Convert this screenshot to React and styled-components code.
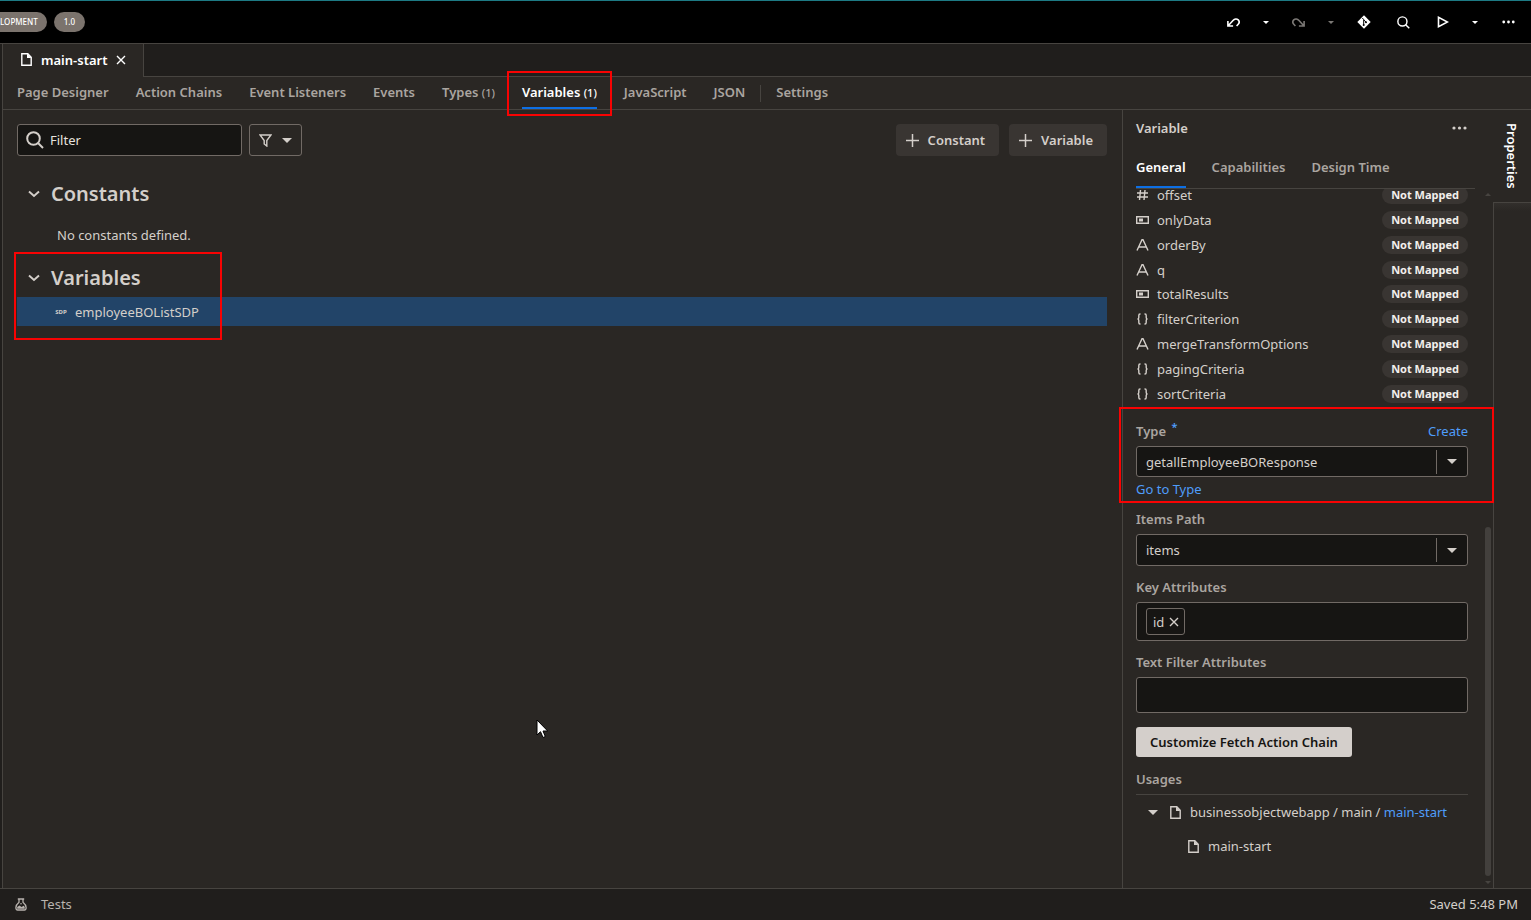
import React from 'react';
import styled, { createGlobalStyle } from 'styled-components';

const Global = createGlobalStyle`
  * { box-sizing: border-box; }
  body {
    margin: 0;
    background: #2a2724;
    color: #d4cfca;
    font: 400 13px/20px "Noto Sans", "Open Sans", sans-serif;
  }
  button, input, select { font: inherit; color: inherit; margin: 0; }
  button { padding: 0; border: 0; background: none; cursor: pointer; }
  h2, p, ul { margin: 0; padding: 0; }
  ul { list-style: none; }
  svg { display: block; flex: none; }
`;

const line = '#474440';
const fieldLine = '#716a65';
const fieldBg = '#161513';
const bar = '#201e1c';
const blue = '#4f9dfa';
const muted = '#aaa5a0';

const Page = styled.div`
  position: relative;
  display: flex;
  flex-direction: column;
  min-height: 100vh;
`;

const TopBar = styled.header`
  display: flex;
  align-items: center;
  justify-content: space-between;
  height: 43px;
  background: #000;
  border-top: 1px solid #1d7a84;
`;
const Pills = styled.div`
  display: flex;
  gap: 7px;
`;
const Pill = styled.span`
  height: 20px;
  padding: ${(p) => (p.$cut ? '0 9px 0 0' : '0 10px')};
  border-radius: ${(p) => (p.$cut ? '0 10px 10px 0' : '10px')};
  background: #7b736d;
  color: #fff;
  font-size: 8px;
  font-weight: 500;
  white-space: nowrap;
`;
const Tools = styled.div`
  display: flex;
  align-items: center;
  padding-right: 4px;
`;
const ToolButton = styled.button`
  display: grid;
  place-items: center;
  width: ${(p) => p.$w}px;
  height: 32px;
  color: ${(p) => (p.$off ? '#7b7875' : '#fff')};
`;

const FileTabs = styled.div`
  display: flex;
  height: 34px;
  border-top: 1px solid ${line};
  background: ${bar};
`;
const LeftEdge = styled.div`
  flex: none;
  width: 3px;
  border-right: 1px solid ${line};
  background: ${bar};
`;
const FileTab = styled.div`
  display: flex;
  align-items: center;
  gap: 9px;
  width: 141px;
  padding: 0 0 2px 18px;
  border-right: 1px solid ${line};
  background: #2a2724;
  color: #fff;
  font-weight: 600;
`;
const FileTabsRest = styled.div`
  flex: 1;
  border-bottom: 1px solid ${line};
`;

const Body = styled.div`
  flex: 1;
  display: flex;
`;
const Work = styled.div`
  flex: 1;
  min-width: 0;
  display: flex;
  flex-direction: column;
`;
const SubTabs = styled.nav`
  display: flex;
  gap: 27px;
  height: 33px;
  padding-left: 14px;
  border-bottom: 1px solid ${line};
`;
const SubTab = styled.button`
  position: relative;
  white-space: nowrap;
  padding-bottom: ${(p) => (p.$active ? 0 : '2px')};
  border-bottom: ${(p) => (p.$active ? '2px solid #0d6fe4' : '0')};
  color: ${(p) => (p.$active ? '#fff' : muted)};
  font-weight: 600;
  small { font-size: 11px; font-weight: 500; }
`;
const TabSplit = styled.span`
  align-self: center;
  width: 1px;
  height: 17px;
  margin: 0 -12px;
  background: ${line};
`;

const Columns = styled.div`
  flex: 1;
  display: flex;
`;
const Main = styled.main`
  flex: 1;
  min-width: 0;
  padding: 14px 15px 0 14px;
`;
const ActionRow = styled.div`
  display: flex;
  height: 32px;
  margin-bottom: 22px;
`;
const FilterBox = styled.label`
  display: flex;
  align-items: center;
  gap: 6px;
  width: 225px;
  padding: 0 8px;
  border: 1px solid ${fieldLine};
  border-radius: 3px;
  background: ${fieldBg};
  input {
    flex: 1;
    min-width: 0;
    padding: 0;
    border: 0;
    outline: 0;
    background: none;
  }
  input::placeholder { color: #e6e2de; opacity: 1; }
`;
const FilterMenu = styled.button`
  display: flex;
  align-items: center;
  justify-content: center;
  gap: 10px;
  width: 53px;
  margin: 0 auto 0 7px;
  border: 1px solid ${fieldLine};
  border-radius: 3px;
`;
const AddButton = styled.button`
  display: flex;
  align-items: center;
  gap: 9px;
  margin-left: 10px;
  padding: 0 14px 0 10px;
  border-radius: 4px;
  background: #393532;
  font-weight: 600;
`;
const Section = styled.section`
  position: relative;
  margin-bottom: 16px;
`;
const SectionTitle = styled.h2`
  display: flex;
  align-items: center;
  gap: 11px;
  height: 32px;
  margin-bottom: 3px;
  padding-left: 11px;
  font-size: 20px;
  line-height: 32px;
  font-weight: 600;
`;
const EmptyNote = styled.p`
  padding: 12px 0 1px 40px;
`;
const VariableRow = styled.button`
  display: flex;
  align-items: center;
  gap: 8px;
  width: 100%;
  height: 29px;
  padding-left: 38px;
  background: #224468;
`;
const TypeTag = styled.span`
  width: 12px;
  font-size: 6px;
  font-weight: 700;
  line-height: 20px;
`;

const Panel = styled.aside`
  position: relative;
  display: flex;
  flex-direction: column;
  width: 371px;
  border-left: 1px solid ${line};
`;
const PanelHead = styled.div`
  padding: 8px 18px 0 13px;
`;
const PanelTitle = styled.div`
  display: flex;
  align-items: center;
  justify-content: space-between;
  height: 20px;
  padding-right: 8px;
  font-weight: 600;
`;
const PanelTabs = styled.div`
  display: flex;
  gap: 26px;
  height: 51px;
  padding-top: 18px;
  border-bottom: 1px solid ${line};
`;
const PanelTab = styled.button`
  height: 32px;
  padding-bottom: ${(p) => (p.$active ? '8px' : '10px')};
  border-bottom: ${(p) => (p.$active ? '2px solid #0d6fe4' : '0')};
  color: ${(p) => (p.$active ? '#fff' : muted)};
  font-weight: 600;
`;
const PanelBody = styled.div`
  flex: 1;
  display: flex;
  overflow: hidden;
`;
const Fields = styled.div`
  flex: 1;
  min-width: 0;
  padding: 0 15px 0 13px;
`;
const ParamList = styled.ul`
  display: grid;
  grid-auto-rows: 1fr;
  height: 223px;
  margin: -6px 0 15px;
`;
const Param = styled.li`
  display: flex;
  align-items: center;
  gap: 8px;
  line-height: 14px;
`;
const ParamName = styled.span`
  flex: 1;
`;
const Badge = styled.span`
  height: 18px;
  padding: 0 9px;
  border-radius: 9px;
  background: #393532;
  color: #f2efec;
  font-size: 11px;
  line-height: 18px;
  font-weight: 700;
`;
const Field = styled.div`
  margin-bottom: ${(p) => p.$gap}px;
`;
const LabelRow = styled.div`
  display: flex;
  justify-content: space-between;
  margin-bottom: 5px;
`;
const Label = styled.label`
  color: ${muted};
  font-weight: 600;
  sup { margin-left: 2px; color: ${blue}; line-height: 0; }
`;
const Link = styled.a`
  color: ${blue};
  text-decoration: none;
`;
const FieldLink = styled(Link)`
  display: block;
  margin-top: 2px;
`;
const SelectBox = styled.div`
  display: flex;
  align-items: center;
  height: ${(p) => p.$h}px;
  border: 1px solid ${fieldLine};
  border-radius: 3px;
  background: ${fieldBg};
  select {
    flex: 1;
    height: 100%;
    padding: 0 9px;
    border: 0;
    outline: 0;
    appearance: none;
    background: none;
  }
`;
const SelectArrow = styled.span`
  display: grid;
  place-items: center;
  width: 31px;
  height: 24px;
  border-left: 1px solid ${fieldLine};
`;
const ChipBox = styled.div`
  display: flex;
  align-items: center;
  height: 39px;
  padding: 0 9px;
  border: 1px solid ${fieldLine};
  border-radius: 3px;
  background: ${fieldBg};
  input {
    flex: 1;
    min-width: 0;
    border: 0;
    outline: 0;
    background: none;
  }
`;
const Chip = styled.span`
  display: flex;
  align-items: center;
  gap: 5px;
  height: 27px;
  padding: 0 5px 0 6px;
  border: 1px solid ${fieldLine};
  border-radius: 3px;
`;
const TextBox = styled.input`
  display: block;
  width: 100%;
  height: 36px;
  padding: 0 9px;
  border: 1px solid ${fieldLine};
  border-radius: 3px;
  outline: 0;
  background: ${fieldBg};
`;
const CustomizeButton = styled.button`
  height: 30px;
  margin-bottom: 12px;
  padding: 0 14px;
  border-radius: 3px;
  background: #d4cfcb;
  color: #161513;
  font-weight: 600;
`;
const UsagesTitle = styled.div`
  padding-bottom: 5px;
  border-bottom: 1px solid ${line};
  color: ${muted};
  font-weight: 600;
`;
const TreeRow = styled.div`
  display: flex;
  align-items: center;
  gap: ${(p) => (p.$child ? 9 : 12)}px;
  height: 34px;
  padding-left: ${(p) => (p.$child ? 52 : 12)}px;
  white-space: nowrap;
`;
const TreeLabel = styled.span`
  display: flex;
  align-items: center;
  gap: 9px;
`;
const ScrollTrack = styled.div`
  display: flex;
  flex-direction: column;
  align-items: center;
  width: 10px;
  padding: 4px 0 4px;
  color: #474440;
`;
const ScrollThumb = styled.div`
  width: 6px;
  height: 349px;
  margin: auto 0 5px;
  border-radius: 3px;
  background: #43403d;
`;

const SideRail = styled.div`
  display: flex;
  flex-direction: column;
  width: 38px;
`;
const RailTab = styled.button`
  height: 92px;
  writing-mode: vertical-rl;
  text-align: left;
  padding: 13px 0 0;
  color: #fff;
  font-weight: 600;
`;
const RailRest = styled.div`
  flex: 1;
  border-left: 1px solid ${line};
  border-top: 1px solid ${line};
  background: linear-gradient(#322f2c, #2a2724 8px);
`;

const Footer = styled.footer`
  display: flex;
  align-items: center;
  justify-content: space-between;
  height: 32px;
  padding: 0 13px 1px 15px;
  border-top: 1px solid ${line};
  background: ${bar};
`;
const TestsButton = styled.button`
  display: flex;
  align-items: center;
  gap: 14px;
  color: #b8b3ae;
`;

const Marker = styled.span`
  position: absolute;
  top: ${(p) => p.$t}px;
  left: ${(p) => p.$l}px;
  right: ${(p) => (p.$w ? 'auto' : `${p.$r}px`)};
  width: ${(p) => (p.$w ? `${p.$w}px` : 'auto')};
  height: ${(p) => p.$h}px;
  z-index: 2;
  border: 2px solid #f80303;
  pointer-events: none;
`;
const Pointer = styled.svg`
  position: absolute;
  left: 536px;
  top: 719px;
`;

const Caret = ({ w = 10 }) => (
  <svg width={w} height={w / 2} viewBox="0 0 10 5" fill="currentColor"><path d="M0 0h10L5 5z" /></svg>
);
const Chevron = () => (
  <svg width="12" height="8" viewBox="0 0 12 8" fill="none" stroke="currentColor" strokeWidth="1.9"><path d="M1 1.5l5 4.500 5-4.500" /></svg>
);
const Cross = () => (
  <svg width="10" height="10" viewBox="0 0 10 10" fill="none" stroke="currentColor" strokeWidth="1.4"><path d="M1 1l8 8M9 1L1 9" /></svg>
);
const Doc = () => (
  <svg width="11" height="13" viewBox="0 0 11 13"><path d="M.8.8h6l3.400 3.400v8H.8z" fill="none" stroke="currentColor" strokeWidth="1.4" /><path d="M6 .5v4.500h4.500z" fill="currentColor" /></svg>
);
const Dots = ({ w = 15 }) => (
  <svg width={w} height="4" viewBox="0 0 15 4" fill="currentColor"><circle cx="2" cy="2" r="1.6" /><circle cx="7.5" cy="2" r="1.6" /><circle cx="13" cy="2" r="1.6" /></svg>
);
const Undo = ({ flip }) => (
  <svg width="13" height="9" viewBox="0 0 13 9" fill="none" stroke="currentColor" strokeWidth="1.6">
    <g transform={flip ? 'translate(13 0) scale(-1 1)' : undefined}>
      <path d="M.9 3v5h5.200M1.200 7.700L6 2.500C7.600.7 9.800.5 11.200 1.900c1.200 1.300 1.100 3.200 0 4.400L9.600 8" />
    </g>
  </svg>
);
const Git = () => (
  <svg width="14" height="14" viewBox="0 0 14 14"><path d="M7 .3L13.700 7 7 13.700.3 7z" fill="#fff" /><path d="M5.300 3l1.400 1.500v5.500M6.700 4.800l2.300 2.300" stroke="#000" fill="none" /><circle cx="6.700" cy="10" r="1" /><circle cx="9" cy="7.200" r="1" /></svg>
);
const Search = ({ s = 12 }) => (
  <svg width={s} height={s} viewBox="0 0 18 18" fill="none" stroke="currentColor" strokeWidth="2"><circle cx="7.500" cy="7.500" r="6.300" /><path d="M12 12l5 5" /></svg>
);
const Play = () => (
  <svg width="12" height="12" viewBox="0 0 12 12" fill="none" stroke="currentColor" strokeWidth="1.6"><path d="M1.500 1.300v9.400L10.500 6z" /></svg>
);
const Funnel = () => (
  <svg width="13" height="13" viewBox="0 0 13 13" fill="none" stroke="currentColor" strokeWidth="1.400"><path d="M1 1h11L7.800 6.500V12L5.200 10V6.500z" /></svg>
);
const Plus = () => (
  <svg width="13" height="13" viewBox="0 0 13 13" stroke="currentColor" strokeWidth="1.500"><path d="M6.500 0v13M0 6.500h13" /></svg>
);
const Flask = () => (
  <svg width="12" height="13" viewBox="0 0 12 13" fill="none" stroke="currentColor" strokeWidth="1.300"><path d="M2.800 1h6.400M4 1v3.300Q1 6.800.9 9.500.9 12 2.500 12h7q1.600 0 1.600-2.500Q11 6.800 8 4.300V1" /><path d="M2.200 9l2.300-1.500L6.500 9l2.200-1.200 1 1.200v1.800H2.200z" fill="currentColor" stroke="none" /><circle cx="6" cy="5.800" r=".8" fill="currentColor" stroke="none" /></svg>
);

const paramIcons = {
  number: <path d="M4.500 1L3.500 11M9 1L8 11M1 4h11M1 8h11" />,
  boolean: <g><path d="M.7 2.700h11.600v6.600H.7z" /><path d="M3 4.500h4v3H3z" fill="currentColor" stroke="none" /></g>,
  string: <path d="M1 11.500L6 .8h1l5 10.700M2.700 8h7.600" />,
  object: <path d="M4.500 1H4Q2.800 1 2.800 2.500V4.500Q2.800 6 1.500 6 2.800 6 2.800 7.500V9.500Q2.800 11 4 11h.5M8.500 1H9q1.200 0 1.200 1.500V4.500q0 1.500 1.300 1.500-1.300 0-1.300 1.500V9.500Q10.200 11 9 11h-.5" />,
};
const ParamIcon = ({ type }) => (
  <svg width="13" height="12" viewBox="0 0 13 12" fill="none" stroke="currentColor" strokeWidth="1.400">{paramIcons[type]}</svg>
);

const params = [
  ['number', 'offset'],
  ['boolean', 'onlyData'],
  ['string', 'orderBy'],
  ['string', 'q'],
  ['boolean', 'totalResults'],
  ['object', 'filterCriterion'],
  ['string', 'mergeTransformOptions'],
  ['object', 'pagingCriteria'],
  ['object', 'sortCriteria'],
];

export default function App() {
  return (
    <Page>
      <Global />
      <TopBar>
        <Pills>
          <Pill $cut>LOPMENT</Pill>
          <Pill>1.0</Pill>
        </Pills>
        <Tools>
          <ToolButton $w={38} aria-label="Undo"><Undo /></ToolButton>
          <ToolButton $w={28} aria-label="Undo history"><Caret w={6} /></ToolButton>
          <ToolButton $w={36} $off aria-label="Redo"><Undo flip /></ToolButton>
          <ToolButton $w={30} $off aria-label="Redo history"><Caret w={6} /></ToolButton>
          <ToolButton $w={36} aria-label="Git"><Git /></ToolButton>
          <ToolButton $w={43} aria-label="Search"><Search s={13} /></ToolButton>
          <ToolButton $w={36} aria-label="Run"><Play /></ToolButton>
          <ToolButton $w={28} aria-label="Run options"><Caret w={6} /></ToolButton>
          <ToolButton $w={38} aria-label="More"><Dots w={13} /></ToolButton>
        </Tools>
      </TopBar>
      <FileTabs>
        <LeftEdge />
        <FileTab>
          <Doc />
          main-start
          <button aria-label="Close main-start"><Cross /></button>
        </FileTab>
        <FileTabsRest />
      </FileTabs>
      <Body>
        <LeftEdge />
        <Work>
          <SubTabs>
            <SubTab>Page Designer</SubTab>
            <SubTab>Action Chains</SubTab>
            <SubTab>Event Listeners</SubTab>
            <SubTab>Events</SubTab>
            <SubTab>Types <small>(1)</small></SubTab>
            <SubTab $active>Variables <small>(1)</small><Marker $t={-6} $l={-15} $r={-15} $h={45} /></SubTab>
            <SubTab>JavaScript</SubTab>
            <SubTab>JSON</SubTab>
            <TabSplit />
            <SubTab>Settings</SubTab>
          </SubTabs>
          <Columns>
            <Main>
              <ActionRow>
                <FilterBox>
                  <Search s={18} />
                  <input placeholder="Filter" aria-label="Filter" />
                </FilterBox>
                <FilterMenu aria-label="Filter options"><Funnel /><Caret /></FilterMenu>
                <AddButton><Plus />Constant</AddButton>
                <AddButton><Plus />Variable</AddButton>
              </ActionRow>
              <Section>
                <SectionTitle><Chevron />Constants</SectionTitle>
                <EmptyNote>No constants defined.</EmptyNote>
              </Section>
              <Section>
                <Marker $t={-10} $l={-3} $w={208} $h={88} />
                <SectionTitle><Chevron />Variables</SectionTitle>
                <VariableRow><TypeTag>SDP</TypeTag>employeeBOListSDP</VariableRow>
              </Section>
            </Main>
            <Panel>
              <PanelHead>
                <PanelTitle>Variable<button aria-label="Panel menu"><Dots /></button></PanelTitle>
                <PanelTabs>
                  <PanelTab $active>General</PanelTab>
                  <PanelTab>Capabilities</PanelTab>
                  <PanelTab>Design Time</PanelTab>
                </PanelTabs>
              </PanelHead>
              <PanelBody>
                <Fields>
                  <ParamList>
                    {params.map(([type, name]) => (
                      <Param key={name}>
                        <ParamIcon type={type} />
                        <ParamName>{name}</ParamName>
                        <Badge>Not Mapped</Badge>
                      </Param>
                    ))}
                  </ParamList>
                  <Field $gap={10}>
                    <LabelRow>
                      <Label htmlFor="type">Type <sup>*</sup></Label>
                      <Link href="#create">Create</Link>
                    </LabelRow>
                    <SelectBox $h={31}>
                      <select id="type"><option>getallEmployeeBOResponse</option></select>
                      <SelectArrow><Caret /></SelectArrow>
                    </SelectBox>
                    <FieldLink href="#type">Go to Type</FieldLink>
                  </Field>
                  <Field $gap={11}>
                    <LabelRow><Label htmlFor="items">Items Path</Label></LabelRow>
                    <SelectBox $h={32}>
                      <select id="items"><option>items</option></select>
                      <SelectArrow><Caret /></SelectArrow>
                    </SelectBox>
                  </Field>
                  <Field $gap={11}>
                    <LabelRow><Label htmlFor="keys">Key Attributes</Label></LabelRow>
                    <ChipBox>
                      <Chip>id<button aria-label="Remove id"><Cross /></button></Chip>
                      <input id="keys" />
                    </ChipBox>
                  </Field>
                  <Field $gap={14}>
                    <LabelRow><Label htmlFor="text-filter">Text Filter Attributes</Label></LabelRow>
                    <TextBox id="text-filter" />
                  </Field>
                  <CustomizeButton>Customize Fetch Action Chain</CustomizeButton>
                  <UsagesTitle>Usages</UsagesTitle>
                  <TreeRow>
                    <Caret />
                    <TreeLabel>
                      <Doc />
                      <span>businessobjectwebapp / main / <Link href="#main-start">main-start</Link></span>
                    </TreeLabel>
                  </TreeRow>
                  <TreeRow $child><Doc />main-start</TreeRow>
                </Fields>
                <ScrollTrack>
                  <svg width="6" height="3" viewBox="0 0 6 3" fill="currentColor"><path d="M0 3h6L3 0z" /></svg>
                  <ScrollThumb />
                  <Caret w={6} />
                </ScrollTrack>
              </PanelBody>
              <Marker $t={297} $l={-4} $r={-1} $h={96} />
            </Panel>
            <SideRail>
              <RailTab>Properties</RailTab>
              <RailRest />
            </SideRail>
          </Columns>
        </Work>
      </Body>
      <Footer>
        <TestsButton><Flask />Tests</TestsButton>
        <span>Saved 5:48 PM</span>
      </Footer>
      <Pointer width="13" height="20" viewBox="0 0 13 20"><path d="M1 1v15l3.500-3.300L7 18.500l2.300-1L7 12h4.700z" fill="#fff" stroke="#000" /></Pointer>
    </Page>
  );
}
